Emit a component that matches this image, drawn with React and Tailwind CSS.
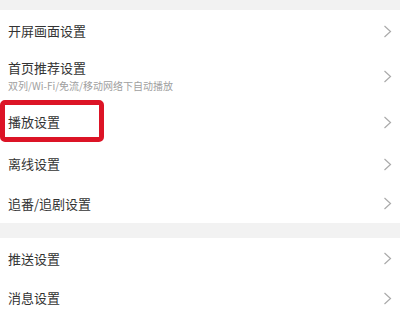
import React from "react";

function Chevron() {
  return (
    <svg width="9" height="13" viewBox="0 0 9 13" fill="none" className="shrink-0">
      <path d="M1.5 1L7.5 6.5L1.5 12" stroke="#aaaaaa" strokeWidth="1.2" />
    </svg>
  );
}

function Row({ title, sub, h, children }) {
  return (
    <div className={`relative flex items-center justify-between bg-white pl-2 pr-[8px] ${h}`}>
      <div className="flex flex-col">
        <span className="text-[13px] leading-[18px] text-[#333]">{title}</span>
        {sub && <span className="text-[10px] leading-[14px] text-[#a0a0a0] mt-[2px]">{sub}</span>}
      </div>
      <Chevron />
      {children}
    </div>
  );
}

export default function App() {
  return (
    <div
      className="w-[400px] h-[313px] overflow-hidden bg-white"
      style={{ fontFamily: '"Noto Sans CJK SC", "Noto Sans", sans-serif' }}
    >
      <div className="h-[10px] bg-[#f2f2f2]" />
      <Row title="开屏画面设置" h="h-[42px]" />
      <Row title="首页推荐设置" sub="双列/Wi-Fi/免流/移动网络下自动播放" h="h-[48px]" />
      <Row title="播放设置" h="h-[44px]">
        <div className="absolute left-0 top-0 w-[104px] h-[42px] border-[5px] border-[#dc1426] rounded-[5px]" />
      </Row>
      <Row title="离线设置" h="h-[40px]" />
      <Row title="追番/追剧设置" h="h-[39px]" />
      <div className="h-[15px] bg-[#f2f2f2]" />
      <Row title="推送设置" h="h-[41px]" />
      <Row title="消息设置" h="h-[38px]" />
    </div>
  );
}
